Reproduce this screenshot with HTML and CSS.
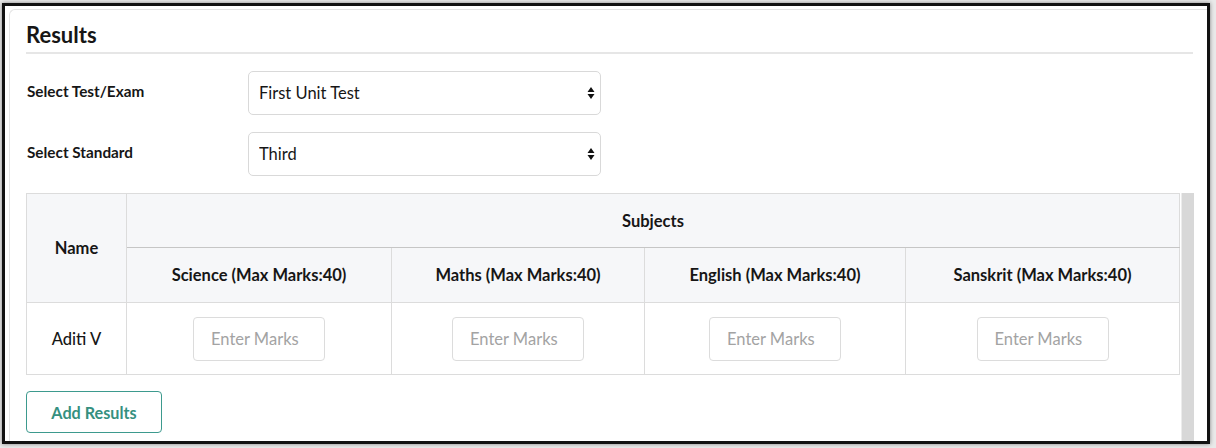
FILE: index.html
```html
<!DOCTYPE html>
<html lang="en">
<head>
<meta charset="utf-8">
<title>Results</title>
<link rel="stylesheet" href="styles.css">
</head>
<body>
<div class="frame">
  <div class="card">
    <h2 class="title">Results</h2>
    <div class="rule"></div>
    <div class="form-row">
      <label class="form-label">Select Test/Exam</label>
      <div class="select-wrap">
        <select class="select"><option>First Unit Test</option></select>
        <svg class="arrows" width="8" height="12" viewBox="0 0 8 12"><path d="M4 0 L7.5 5 H0.5 Z M4 12 L7.5 7 H0.5 Z" fill="#111"/></svg>
      </div>
    </div>
    <div class="form-row">
      <label class="form-label">Select Standard</label>
      <div class="select-wrap">
        <select class="select"><option>Third</option></select>
        <svg class="arrows" width="8" height="12" viewBox="0 0 8 12"><path d="M4 0 L7.5 5 H0.5 Z M4 12 L7.5 7 H0.5 Z" fill="#111"/></svg>
      </div>
    </div>
    <div class="table-wrap">
      <table class="marks">
        <thead>
          <tr class="row-top">
            <th rowspan="2" class="col-name">Name</th>
            <th colspan="4" class="subjects">Subjects</th>
          </tr>
          <tr class="row-sub">
            <th class="col-sci">Science (Max Marks:40)</th>
            <th class="col-math">Maths (Max Marks:40)</th>
            <th class="col-eng">English (Max Marks:40)</th>
            <th class="col-san">Sanskrit (Max Marks:40)</th>
          </tr>
        </thead>
        <tbody>
          <tr class="row-body">
            <td class="name-cell">Aditi V</td>
            <td><input class="marks-input" placeholder="Enter Marks"></td>
            <td><input class="marks-input" placeholder="Enter Marks"></td>
            <td><input class="marks-input" placeholder="Enter Marks"></td>
            <td><input class="marks-input" placeholder="Enter Marks"></td>
          </tr>
        </tbody>
      </table>
    </div>
    <button class="btn-add">Add Results</button>
    <div class="scrollbar"></div>
  </div>
</div>
</body>
</html>
```

FILE: styles.css
```css
* { box-sizing: border-box; }
html, body {
  margin: 0;
  padding: 0;
  background: #e9e9e9;
  width: 1216px;
  height: 448px;
  overflow: hidden;
}
body {
  font-family: Lato, "Open Sans", sans-serif;
  color: #1c1c1c;
}
.frame {
  margin: 3px 6px 0 2px;
  width: 1208px;
  height: 441px;
  border: 3px solid #111;
  background: #fff;
  box-shadow: 0 0 4px rgba(0,0,0,0.45);
  padding: 3px 0 0 4px;
  overflow: hidden;
}
.card {
  position: relative;
  height: 100%;
  border-top: 1px solid #e4e4e4;
  border-left: 1px solid #e4e4e4;
  border-top-left-radius: 6px;
  padding: 0 0 0 16px;
  width: 1220px;
}
.title {
  margin: 0;
  padding-top: 12px;
  font-size: 22px;
  line-height: 26px;
  font-weight: 700;
  color: #161616;
}
.rule {
  margin-top: 4px;
  width: 1167px;
  height: 2px;
  background: #e6e6e6;
}
.form-row {
  display: flex;
  align-items: center;
  margin-top: 17px;
}
.form-row:first-of-type { margin-top: 15px; }
.form-label {
  width: 222px;
  font-size: 15.3px;
  font-weight: 700;
  padding-left: 1px;
  margin-top: -4px;
  color: #161616;
}
.select-wrap {
  position: relative;
  width: 353px;
  height: 44px;
}
.select {
  appearance: none;
  -webkit-appearance: none;
  width: 100%;
  height: 100%;
  border: 1px solid #d9d9d9;
  border-radius: 5px;
  background: #fff;
  padding: 0 0 0 10px;
  font-family: Lato, sans-serif;
  font-size: 16.5px;
  color: #161616;
}
.arrows {
  position: absolute;
  right: 6px;
  top: 16px;
}
.table-wrap {
  margin-top: 17px;
  width: 1154px;
}
.marks {
  width: 100%;
  border-collapse: collapse;
  border: 1px solid #dcdcdc;
}
.marks th, .marks td {
  border: 1px solid #dcdcdc;
  text-align: center;
  padding: 0;
}
.marks th {
  background: #f6f7f9;
  font-size: 16.5px;
  font-weight: 700;
  color: #161616;
}
.row-top th { height: 54px; }
.marks th.subjects { border-bottom: 1px solid #c6c6c6; }
.row-sub th { height: 55px; }
.col-name { width: 100px; }
.col-sci { width: 265px; }
.col-math { width: 253px; }
.col-eng { width: 261px; }
.col-san { width: 274px; }
.row-body td { height: 72px; }
.name-cell {
  font-size: 16.5px;
  font-weight: 500;
  color: #161616;
}
.marks-input {
  width: 132px;
  height: 44px;
  border: 1px solid #dcdcdc;
  border-radius: 4px;
  padding: 0 0 0 17px;
  font-family: Lato, sans-serif;
  font-size: 16.5px;
  color: #333;
  display: block;
  margin: 0 auto;
}
.marks-input::placeholder { color: #a3a3a3; }
.btn-add {
  display: block;
  margin-top: 16px;
  width: 136px;
  height: 42px;
  border: 1px solid #3d9a8e;
  border-radius: 4px;
  background: #fff;
  color: #35907f;
  font-family: Lato, sans-serif;
  font-size: 16.2px;
  font-weight: 700;
}
.scrollbar {
  position: absolute;
  left: 1171px;
  top: 183px;
  width: 13px;
  height: 260px;
  background: #d8d8d8;
  border-left: 1px solid #ececec;
}
```
